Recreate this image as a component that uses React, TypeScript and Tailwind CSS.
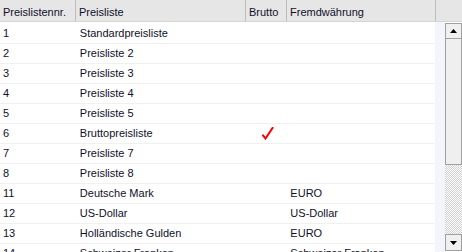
const ROWS: { nr: string; name: string; brutto?: boolean; fw?: string }[] = [
  { nr: "1", name: "Standardpreisliste" },
  { nr: "2", name: "Preisliste 2" },
  { nr: "3", name: "Preisliste 3" },
  { nr: "4", name: "Preisliste 4" },
  { nr: "5", name: "Preisliste 5" },
  { nr: "6", name: "Bruttopreisliste", brutto: true },
  { nr: "7", name: "Preisliste 7" },
  { nr: "8", name: "Preisliste 8" },
  { nr: "11", name: "Deutsche Mark", fw: "EURO" },
  { nr: "12", name: "US-Dollar", fw: "US-Dollar" },
  { nr: "13", name: "Holländische Gulden", fw: "EURO" },
  { nr: "14", name: "Schweizer Franken", fw: "Schweizer Franken" },
];

function Check() {
  return (
    <svg width="12" height="13" viewBox="0 0 12 13" className="block">
      <path d="M1 8.5 L3.5 11.5 L10.5 1" stroke="#ff0000" strokeWidth="2" fill="none" strokeLinecap="square" />
    </svg>
  );
}

export default function App() {
  return (
    <div
      className="w-[462px] h-[252px] overflow-hidden bg-white text-[11px] text-[#10102a]"
      style={{ fontFamily: '"Liberation Sans", Arial, sans-serif' }}
    >
      <div className="flex h-[22px] bg-[#e6e6e6] border-b border-[#d4d4d4]">
        <div className="w-[76px] pl-[3px] pt-[4px] border-r border-[#bdbdbd]">Preislistennr.</div>
        <div className="w-[170px] pl-[3px] pt-[4px] border-r border-[#bdbdbd]">Preisliste</div>
        <div className="w-[41px] pl-[3px] pt-[4px] border-r border-[#bdbdbd]">Brutto</div>
        <div className="w-[149px] pl-[3px] pt-[4px] border-r border-[#bdbdbd]">Fremdwährung</div>
      </div>
      <div className="flex">
        <div className="w-[435px] pt-[2px]">
          {ROWS.map((r) => (
            <div key={r.nr} className="flex h-[20px] items-center border-b border-[#f0f0f0]">
              <div className="w-[76px] pl-[3px]">{r.nr}</div>
              <div className="w-[170px] pl-[4px]">{r.name}</div>
              <div className="w-[41px] pl-[17px]">{r.brutto && <Check />}</div>
              <div className="w-[149px] pl-[4px]">{r.fw}</div>
            </div>
          ))}
        </div>
        <div className="w-[10px] h-[230px] bg-[#f4f5fb]" />
        <div className="w-[17px] h-[230px] flex flex-col pt-[1px]">
          <div className="h-[16px] border border-[#a0a0a0] bg-[#f0f0f0] flex items-center justify-center">
            <svg width="7" height="4" viewBox="0 0 7 4"><path d="M0 4 L3.5 0 L7 4 Z" fill="#000" /></svg>
          </div>
          <div className="h-[126px] border border-[#a0a0a0] border-t-0 bg-[#efefef]" />
          <div
            className="flex-1 bg-[#f0f0f0]"
            style={{ backgroundImage: "repeating-conic-gradient(#d0d0d0 0% 25%, #ffffff 0% 50%)", backgroundSize: "2px 2px" }}
          />
          <div className="h-[17px] border border-[#a0a0a0] bg-[#f0f0f0] flex items-center justify-center">
            <svg width="7" height="4" viewBox="0 0 7 4"><path d="M0 0 L7 0 L3.5 4 Z" fill="#000" /></svg>
          </div>
          <div className="h-[1px]" />
        </div>
      </div>
    </div>
  );
}
